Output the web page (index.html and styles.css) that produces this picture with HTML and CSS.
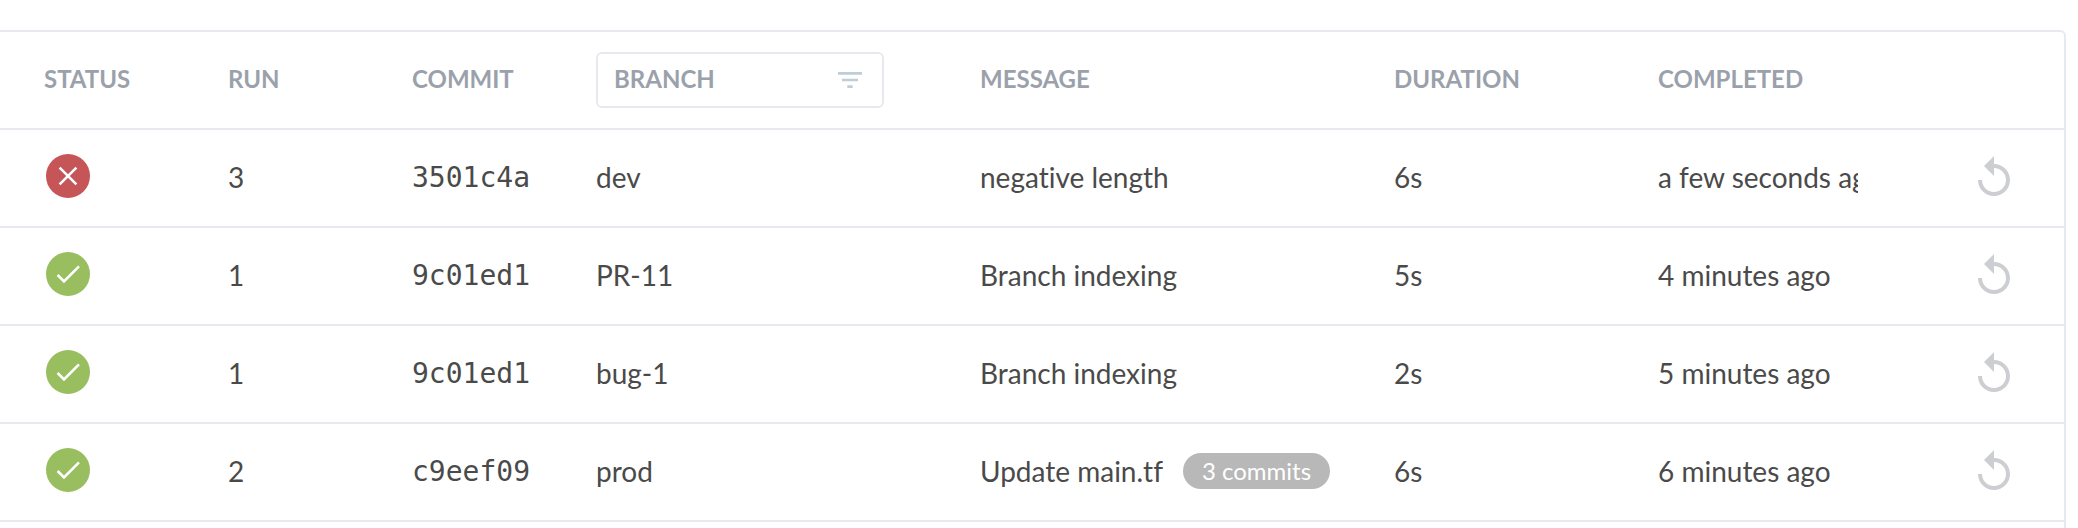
FILE: index.html
```html
<!DOCTYPE html>
<html lang="en">
<head>
<meta charset="utf-8">
<meta name="viewport" content="width=device-width, initial-scale=1">
<title>Runs</title>
<link rel="stylesheet" href="styles.css">
</head>
<body>
<svg class="symbols" aria-hidden="true">
  <symbol id="failure" viewBox="0 0 48 48">
    <circle cx="24" cy="24" r="22" fill="#c65557"/>
    <path d="M15.6 15.6L32.4 32.4M32.4 15.6L15.6 32.4" fill="none" stroke="#fff" stroke-width="2.6"/>
  </symbol>
  <symbol id="success" viewBox="0 0 48 48">
    <circle cx="24" cy="24" r="22" fill="#98be60"/>
    <path d="M13.6 25L20 31.4L35 16.4" fill="none" stroke="#fff" stroke-width="2.6"/>
  </symbol>
  <symbol id="replay" viewBox="0 0 24 24">
    <path d="M12 5V1L7 6l5 5V7c3.31 0 6 2.69 6 6s-2.69 6-6 6-6-2.69-6-6H4c0 4.42 3.58 8 8 8s8-3.58 8-8-3.58-8-8-8z"/>
  </symbol>
  <symbol id="filter" viewBox="0 0 24 24">
    <path d="M10 18h4v-2h-4v2zM3 6v2h18V6H3zm3 7h12v-2H6v2z"/>
  </symbol>
</svg>
<main class="runs">
  <table class="runs-table">
    <colgroup>
      <col class="col-short"><col class="col-short"><col class="col-short">
      <col class="col-branch"><col class="col-message">
      <col class="col-time"><col class="col-time"><col class="col-actions">
    </colgroup>
    <thead>
      <tr>
        <th scope="col">STATUS</th>
        <th scope="col">RUN</th>
        <th scope="col">COMMIT</th>
        <th scope="col" class="filter-cell">
          <label class="filter">
            <input class="filter-input" type="text" placeholder="BRANCH" aria-label="Filter by branch">
            <svg class="filter-icon" aria-hidden="true"><use href="#filter"/></svg>
          </label>
        </th>
        <th scope="col">MESSAGE</th>
        <th scope="col">DURATION</th>
        <th scope="col">COMPLETED</th>
        <td></td>
      </tr>
    </thead>
    <tbody>
      <tr>
        <td class="status"><svg class="icon" role="img" aria-label="Failed"><use href="#failure"/></svg></td>
        <td>3</td>
        <td class="commit">3501c4a</td>
        <td>dev</td>
        <td>negative length</td>
        <td>6s</td>
        <td><div class="clip">a few seconds ago</div></td>
        <td class="actions"><button class="replay" type="button" aria-label="Replay"><svg class="icon"><use href="#replay"/></svg></button></td>
      </tr>
      <tr>
        <td class="status"><svg class="icon" role="img" aria-label="Passed"><use href="#success"/></svg></td>
        <td>1</td>
        <td class="commit">9c01ed1</td>
        <td>PR-11</td>
        <td>Branch indexing</td>
        <td>5s</td>
        <td><div class="clip">4 minutes ago</div></td>
        <td class="actions"><button class="replay" type="button" aria-label="Replay"><svg class="icon"><use href="#replay"/></svg></button></td>
      </tr>
      <tr>
        <td class="status"><svg class="icon" role="img" aria-label="Passed"><use href="#success"/></svg></td>
        <td>1</td>
        <td class="commit">9c01ed1</td>
        <td>bug-1</td>
        <td>Branch indexing</td>
        <td>2s</td>
        <td><div class="clip">5 minutes ago</div></td>
        <td class="actions"><button class="replay" type="button" aria-label="Replay"><svg class="icon"><use href="#replay"/></svg></button></td>
      </tr>
      <tr>
        <td class="status"><svg class="icon" role="img" aria-label="Passed"><use href="#success"/></svg></td>
        <td>2</td>
        <td class="commit">c9eef09</td>
        <td>prod</td>
        <td><div class="message"><span>Update main.tf</span><span class="badge">3 commits</span></div></td>
        <td>6s</td>
        <td><div class="clip">6 minutes ago</div></td>
        <td class="actions"><button class="replay" type="button" aria-label="Replay"><svg class="icon"><use href="#replay"/></svg></button></td>
      </tr>
    </tbody>
  </table>
</main>
</body>
</html>
```
FILE: styles.css
```css
* {
  box-sizing: border-box;
}

body {
  margin: 0;
  min-height: 100vh;
  padding: 30px 12px 0 0;
  display: flex;
  flex-direction: column;
  background: #fff;
  color: #4a4a4a;
  font: 28px/36px Lato, sans-serif;
  font-variant-ligatures: none;
}

.symbols {
  position: absolute;
  width: 0;
  height: 0;
}

.runs {
  flex: 1;
  border: 2px solid #e6eaee;
  border-width: 2px 2px 0 0;
  border-top-right-radius: 6px;
}

.runs-table {
  width: 100%;
  table-layout: fixed;
  border-collapse: separate;
  border-spacing: 0;
}

.col-short {
  width: 184px;
}

.col-branch {
  width: 384px;
}

.col-time {
  width: 264px;
}

.col-actions {
  width: 186px;
}

th,
td {
  height: 98px;
  padding: 0 0 2px 44px;
  border-bottom: 2px solid #e6eaee;
  text-align: left;
  vertical-align: middle;
  white-space: nowrap;
}

th {
  color: #9ba1ab;
  font-size: 24px;
  font-weight: 700;
}

.filter-cell {
  padding-bottom: 0;
}

.filter {
  display: flex;
  align-items: center;
  width: 288px;
  height: 56px;
  padding: 0 16px;
  border: 2px solid #e6eaee;
  border-radius: 6px;
}

.filter-input {
  flex: 1;
  min-width: 0;
  padding: 0 0 2px;
  border: 0;
  outline: 0;
  background: none;
  color: inherit;
  font: inherit;
}

.filter-input::placeholder {
  color: inherit;
  opacity: 1;
}

.filter-icon {
  width: 32px;
  height: 32px;
  fill: #becdd6;
}

.icon {
  display: block;
  width: 48px;
  height: 48px;
}

.status {
  padding-bottom: 4px;
}

.commit {
  padding-bottom: 0;
  font-family: "DejaVu Sans Mono", monospace;
}

.clip {
  margin-right: 20px;
  overflow: hidden;
}

.message {
  display: flex;
  align-items: center;
  gap: 20px;
}

.badge {
  padding: 0 19px;
  border-radius: 18px;
  background: #b8b8b8;
  color: #fff;
  font-size: 24px;
}

.actions {
  padding-bottom: 0;
  padding-left: 92px;
}

.replay {
  display: block;
  padding: 0;
  border: 0;
  background: none;
  fill: #cdced2;
  cursor: pointer;
}
```
